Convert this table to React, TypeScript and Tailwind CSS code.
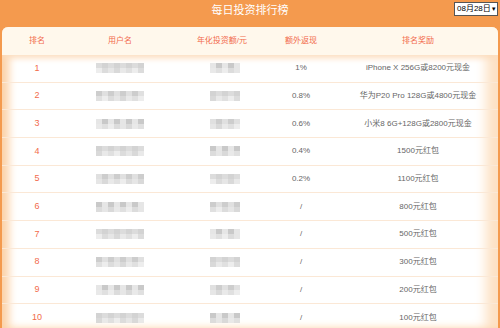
import React from "react";

const rows = [
  { rank: "1", cash: "1%", prize: "iPhone X 256G或8200元现金" },
  { rank: "2", cash: "0.8%", prize: "华为P20 Pro 128G或4800元现金" },
  { rank: "3", cash: "0.6%", prize: "小米8 6G+128G或2800元现金" },
  { rank: "4", cash: "0.4%", prize: "1500元红包" },
  { rank: "5", cash: "0.2%", prize: "1100元红包" },
  { rank: "6", cash: "/", prize: "800元红包" },
  { rank: "7", cash: "/", prize: "500元红包" },
  { rank: "8", cash: "/", prize: "300元红包" },
  { rank: "9", cash: "/", prize: "200元红包" },
  { rank: "10", cash: "/", prize: "100元红包" },
];

// 打码的灰块，按行错开一点深浅
const shades = ["#dcdcdc", "#cdcdcd", "#e6e6e6", "#d3d3d3", "#e0e0e0", "#c9c9c9"];

function Mosaic({ cells, seed }: { cells: number; seed: number }) {
  return (
    <div className="flex flex-col blur-[0.7px]">
      <div className="flex h-[5px]">
        {Array.from({ length: cells }).map((_, i) => (
          <div
            key={i}
            className="w-[6px] h-[5px]"
            style={{ background: shades[(i * 3 + seed) % shades.length] }}
          />
        ))}
      </div>
      <div className="flex h-[5px]">
        {Array.from({ length: cells }).map((_, i) => (
          <div
            key={i}
            className="w-[6px] h-[5px]"
            style={{ background: shades[(i * 5 + seed + 2) % shades.length], opacity: 0.7 }}
          />
        ))}
      </div>
    </div>
  );
}

export default function App() {
  return (
    <div
      className="w-[500px] h-[328px] bg-[#f49a4e] overflow-hidden flex flex-col"
      style={{ fontFamily: '"Liberation Sans", "Noto Sans CJK SC", sans-serif' }}
    >
      {/* 顶部标题 */}
      <div className="relative h-[27px] flex items-center justify-center">
        <span className="text-white text-[11px] leading-none pb-[6px]">每日投资排行榜</span>
        <div className="absolute right-[2px] top-[2px] h-[14px] w-[44px] bg-white border border-[#555] flex items-center justify-between pl-[2px] pr-[1px] text-[8px] text-black leading-none whitespace-nowrap">
          <span>08月28日</span>
          <span className="text-[6px]">▼</span>
        </div>
      </div>

      {/* 表格卡片 */}
      <div className="mx-[2px] flex-1 bg-white rounded-t-[6px] overflow-hidden shadow-[inset_9px_0_8px_-2px_#fcd2a8,inset_-14px_0_12px_-2px_#fde1c4]">
        <div className="h-[28px] flex items-center bg-[#fff8ec] text-[#f26b4c] text-[8px] shadow-[0_3px_6px_#fcdcbc] rounded-t-[6px] relative">
          <div className="w-[70px] text-center">排名</div>
          <div className="w-[96px] text-center">用户名</div>
          <div className="w-[108px] text-center">年化投资额/元</div>
          <div className="w-[50px] text-center">额外返现</div>
          <div className="flex-1 pl-[12px] text-center">排名奖励</div>
        </div>
        {rows.map((r, idx) => (
          <div
            key={r.rank}
            className="h-[27.7px] flex items-center border-b border-[#fbe8d6] text-[8px] text-[#666]"
          >
            <div className="w-[70px] text-center text-[#f26b4c] text-[9px]">{r.rank}</div>
            <div className="w-[96px] flex justify-center">
              <Mosaic cells={8} seed={idx} />
            </div>
            <div className="w-[108px] flex justify-center pl-[6px]">
              <Mosaic cells={5} seed={idx + 2} />
            </div>
            <div className="w-[50px] text-center">{r.cash}</div>
            <div className="flex-1 pl-[12px] text-center">{r.prize}</div>
          </div>
        ))}
      </div>
    </div>
  );
}
